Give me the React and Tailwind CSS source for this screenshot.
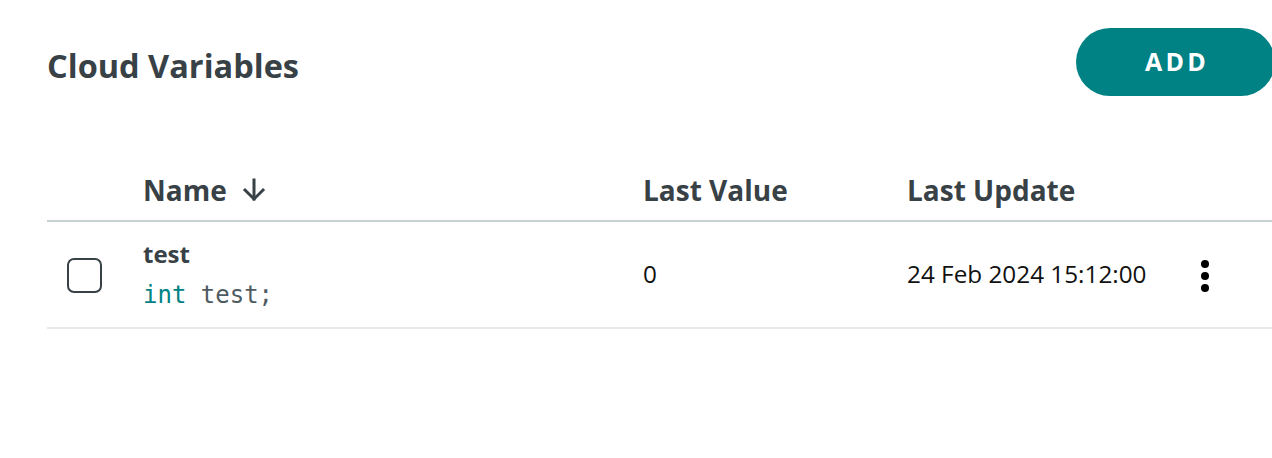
export default function App() {
  return (
    <div className="w-[1272px] h-[458px] overflow-hidden bg-white" style={{ fontFamily: '"Open Sans", sans-serif' }}>
      <div className="w-[1228px] ml-[47px]">
        <div className="flex items-center justify-between pt-[28px] h-[96px]">
          <h1 className="text-[32.5px] font-bold leading-none text-[#374146] mt-[8px]">Cloud Variables</h1>
          <button className="h-[68px] w-[199px] rounded-full bg-[#008184] text-white text-[25px] font-bold tracking-[0.13em] flex items-center justify-center pl-[3px]">
            ADD
          </button>
        </div>
        <div className="mt-[64px]">
          <div className="flex items-center h-[62px] border-b-2 border-[#c9d2d2] text-[28px] font-bold text-[#374146]">
            <div className="w-[96px]" />
            <div className="w-[500px] flex items-center gap-[15px]">
              <span>Name</span>
              <svg width="24" height="24" viewBox="0 0 24 24" fill="none" stroke="#374146" strokeWidth="3" strokeLinecap="square">
                <path d="M12 2v19" />
                <path d="M3 12l9 9 9-9" />
              </svg>
            </div>
            <div className="w-[264px]">Last Value</div>
            <div className="flex-1">Last Update</div>
          </div>
          <div className="flex items-center h-[107px] border-b-2 border-[#e8e9e9] text-[24.3px] text-[#111]">
            <div className="w-[96px] flex pl-[20px]">
              <div className="w-[35px] h-[35px] rounded-[7px] border-[2.5px] border-[#374146] mt-[2px]" />
            </div>
            <div className="w-[500px] flex flex-col">
              <span className="font-bold text-[#374146] text-[24px] leading-[28px] -mt-[1px]">test</span>
              <span className="leading-[28px] text-[24px] mt-[13px] text-[#4e5b61]" style={{ fontFamily: '"DejaVu Sans Mono", monospace' }}>
                <span className="text-[#008184]">int</span> test;
              </span>
            </div>
            <div className="w-[264px]">0</div>
            <div className="w-[294px]">24 Feb 2024 15:12:00</div>
            <div className="flex flex-col gap-[4px] items-center w-[8px] mt-[2px]">
              <span className="w-[8px] h-[8px] rounded-full bg-black" />
              <span className="w-[8px] h-[8px] rounded-full bg-black" />
              <span className="w-[8px] h-[8px] rounded-full bg-black" />
            </div>
          </div>
        </div>
      </div>
    </div>
  );
}
